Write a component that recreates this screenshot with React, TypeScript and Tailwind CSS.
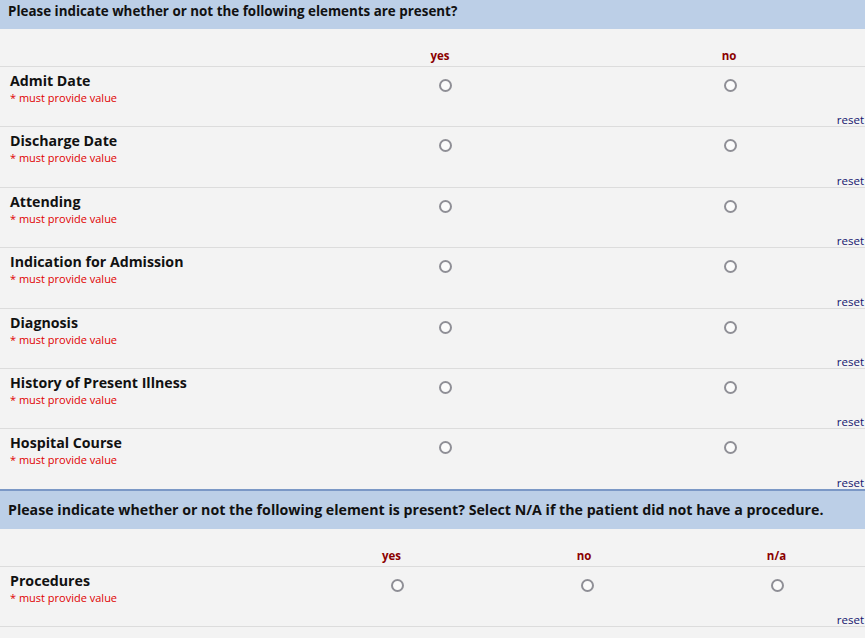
const rows = [
  'Admit Date',
  'Discharge Date',
  'Attending',
  'Indication for Admission',
  'Diagnosis',
  'History of Present Illness',
  'Hospital Course',
]

const Radio = () => (
  <span className="block w-[13px] h-[13px] rounded-full border-2 border-[#8f8f96] bg-[#fbfbfb]" />
)

type Col = { label: string; width: string; shift: string }

const MatrixRow = ({ label, cols }: { label: string; cols: Col[] }) => (
  <div className="relative flex h-[60.4px] border-t border-[#dcdcdc]">
    <div className="w-[295px] shrink-0 pl-[10px] pt-[4px]">
      <div className="text-[14.2px] font-bold text-[#111] leading-[20px]">{label}</div>
      <div className="text-[11px] text-[#e00000] leading-[14px]">* must provide value</div>
    </div>
    {cols.map((c) => (
      <div key={c.label} className={`${c.width} shrink-0 flex justify-center pt-[12px]`}>
        <div className={c.shift}>
          <Radio />
        </div>
      </div>
    ))}
    <span className="absolute right-[1px] bottom-[-1px] text-[11.5px] text-[#14146e] leading-[14px]">
      reset
    </span>
  </div>
)

const ColHeads = ({ cols, height }: { cols: Col[]; height: string }) => (
  <div className={`flex ${height} items-end pb-[3px]`}>
    <div className="w-[295px] shrink-0" />
    {cols.map((c) => (
      <div key={c.label} className={`${c.width} shrink-0 text-center text-[11.5px] font-bold text-[#8b0000] leading-[14px]`}>
        {c.label}
      </div>
    ))}
  </div>
)

export default function App() {
  const cols1: Col[] = [
    { label: 'yes', width: 'w-[290px]', shift: 'ml-[10px]' },
    { label: 'no', width: 'w-[288px]', shift: 'ml-[2px]' },
  ]
  const cols2: Col[] = [
    { label: 'yes', width: 'w-[193px]', shift: 'ml-[12px]' },
    { label: 'no', width: 'w-[192px]', shift: 'ml-[6px]' },
    { label: 'n/a', width: 'w-[193px]', shift: 'ml-[2px]' },
  ]

  return (
    <div className="w-[865px] h-[638px] overflow-hidden bg-[#f3f3f3] font-['Open_Sans',sans-serif]">
      {/* first matrix */}
      <div className="h-[29px] bg-[#bccfe7] pl-[8px] pt-[1px] text-[13.4px] font-bold text-[#111] leading-[20px]">
        Please indicate whether or not the following elements are present?
      </div>
      <ColHeads cols={cols1} height="h-[37px]" />
      {rows.map((r) => (
        <MatrixRow key={r} label={r} cols={cols1} />
      ))}

      {/* second matrix */}
      <div className="h-[40px] bg-[#bccfe7] border-t-2 border-[#7b98c6] pl-[8px] flex items-center text-[14.2px] font-bold text-[#111] leading-[20px] whitespace-nowrap">
        Please indicate whether or not the following element is present? Select N/A if the patient did not have a procedure.
      </div>
      <ColHeads cols={cols2} height="h-[37px]" />
      <MatrixRow label="Procedures" cols={cols2} />
      <div className="border-t border-[#dcdcdc]" />
    </div>
  )
}
